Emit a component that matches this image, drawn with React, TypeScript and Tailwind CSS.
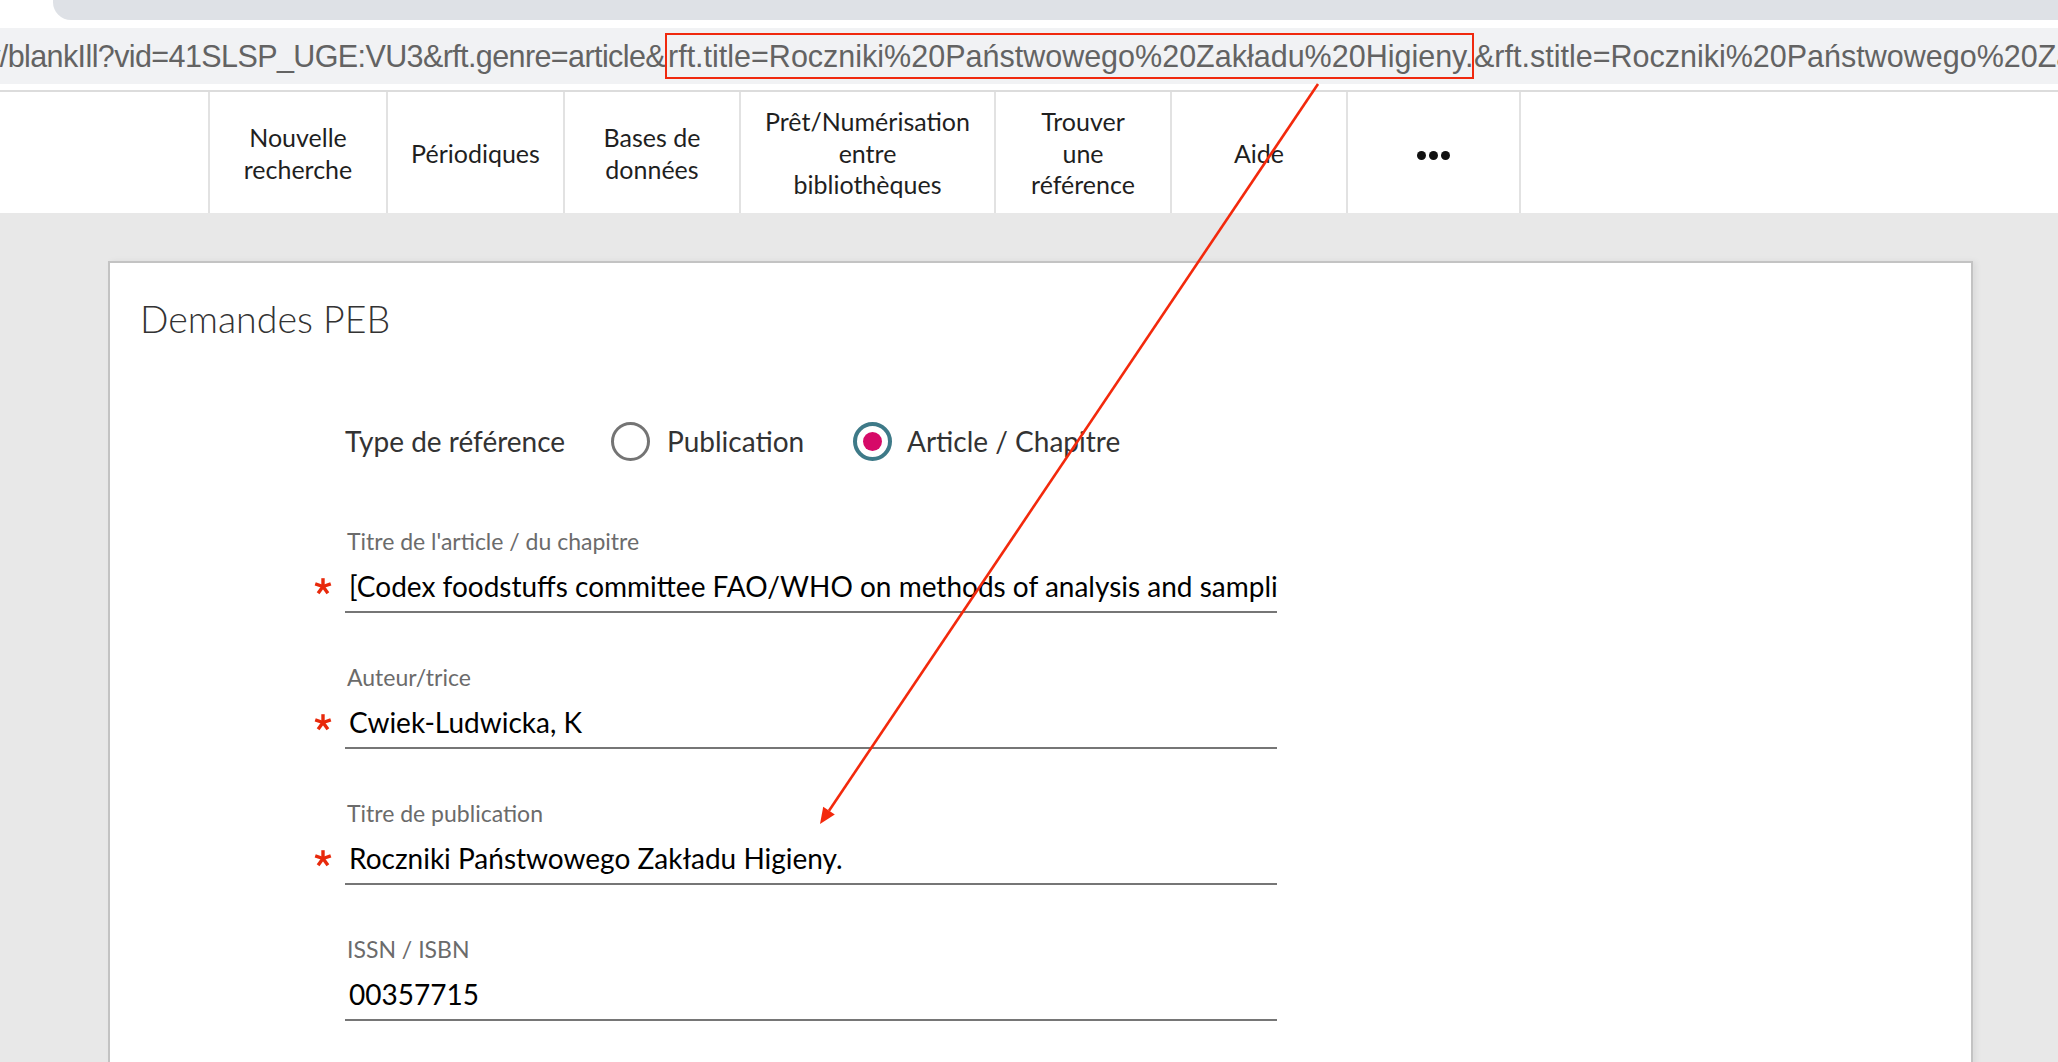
import React from "react";

const Star = () => (
  <svg width="18" height="18" viewBox="0 0 18 18" aria-hidden="true">
    <g stroke="#e8290b" strokeWidth="3.4" strokeLinecap="butt">
      <line x1="9" y1="9.5" x2="9" y2="1.2" />
      <line x1="9" y1="9.5" x2="16.8" y2="6.9" />
      <line x1="9" y1="9.5" x2="13.9" y2="16.2" />
      <line x1="9" y1="9.5" x2="4.1" y2="16.2" />
      <line x1="9" y1="9.5" x2="1.2" y2="6.9" />
    </g>
  </svg>
);

function Field({
  label,
  value,
  required,
}: {
  label: string;
  value: string;
  required?: boolean;
}) {
  return (
    <div className="w-[932px]">
      <div className="h-[28px] pl-[2px] text-[23px] leading-[28px] text-[#6b6b6b]">{label}</div>
      <div className="mt-[6px] flex h-[52px] items-center border-b-2 border-[#767676]">
        {required ? (
          <span className="-ml-[34px] flex w-[34px] shrink-0 items-center pl-[3px]">
            <Star />
          </span>
        ) : null}
        <div className="min-w-0 flex-1 overflow-hidden whitespace-nowrap pl-[4px] pr-[3px] text-[28px] leading-[36px] text-black">
          {value}
        </div>
      </div>
    </div>
  );
}

const navItems: { lines: string[]; w: string }[] = [
  { lines: ["Nouvelle", "recherche"], w: "w-[178px]" },
  { lines: ["Périodiques"], w: "w-[177px]" },
  { lines: ["Bases de", "données"], w: "w-[176px]" },
  { lines: ["Prêt/Numérisation", "entre", "bibliothèques"], w: "w-[255px]" },
  { lines: ["Trouver", "une", "référence"], w: "w-[176px]" },
  { lines: ["Aide"], w: "w-[176px]" },
];

export default function App() {
  return (
    <div className="relative h-[1062px] w-[2058px] overflow-hidden bg-white font-[Lato,sans-serif]">
      {/* browser tab strip */}
      <div className="ml-[53px] h-[20px] rounded-bl-[18px] bg-[#dee1e6]" />

      {/* URL bar */}
      <div className="mt-[8px] flex h-[56px] items-center overflow-hidden whitespace-nowrap bg-[#f1f2f4] pt-[2px] font-['Liberation_Sans',Arial,sans-serif] text-[30.5px] text-[#636363]">
        <div className="flex w-[665px] shrink-0 justify-end overflow-hidden">
          <span className="shrink-0 tracking-[-0.6px]">ary/blankIll?vid=41SLSP_UGE:VU3&amp;rft.genre=article&amp;</span>
        </div>
        <div className="-mt-[2px] flex h-[46px] w-[809px] shrink-0 items-center overflow-hidden border-2 border-[#f0290e] pl-[1px] pt-[2px]">
          rft.title=Roczniki%20Państwowego%20Zakładu%20Higieny.
        </div>
        <span className="shrink-0">&amp;rft.stitle=Roczniki%20Państwowego%20Zakładu%20Higieny.</span>
      </div>

      {/* nav */}
      <div className="mt-[6px] flex h-[123px] border-t-2 border-[#dcdcdc] bg-white pl-[208px]">
        {navItems.map((it, i) => (
          <div
            key={i}
            className={`${it.w} flex shrink-0 flex-col items-center justify-center border-l-2 border-[#e2e2e2] pt-[2px] text-center text-[25px] leading-[31.5px] text-[#1f1f1f]`}
          >
            {it.lines.map((l, j) => (
              <span key={j}>{l}</span>
            ))}
          </div>
        ))}
        <div className="flex w-[175px] shrink-0 items-center justify-center gap-[3px] border-x-2 border-[#e2e2e2] pt-[6px]">
          <span className="h-[9px] w-[9px] rounded-full bg-[#111]" />
          <span className="h-[9px] w-[9px] rounded-full bg-[#111]" />
          <span className="h-[9px] w-[9px] rounded-full bg-[#111]" />
        </div>
      </div>

      {/* page */}
      <div className="h-[900px] bg-[#e8e8e8] pt-[48px]">
        <div className="ml-[108px] h-[900px] w-[1865px] border-2 border-[#c3c3c3] bg-white pt-[34px] shadow-[3px_0_6px_rgba(0,0,0,0.06)]">
          <h1 className="pl-[30px] text-[37.5px] font-light leading-[44px] text-[#333]">Demandes PEB</h1>

          <div className="ml-[235px]">
            <div className="mt-[78px] flex h-[44px] items-center text-[28px] text-[#333]">
              <span className="w-[266px] shrink-0">Type de référence</span>
              <span className="h-[39px] w-[39px] shrink-0 rounded-full border-[3px] border-[#747474]" />
              <span className="ml-[17px] w-[186px] shrink-0">Publication</span>
              <span className="flex h-[39px] w-[39px] shrink-0 items-center justify-center rounded-full border-[4px] border-[#3e7a88]">
                <span className="h-[19px] w-[19px] rounded-full bg-[#d60a68]" />
              </span>
              <span className="ml-[15px]">Article / Chapitre</span>
            </div>

            <div className="mt-[64px] flex flex-col gap-[50px]">
              <Field
                label="Titre de l'article / du chapitre"
                value="[Codex foodstuffs committee FAO/WHO on methods of analysis and sampling]"
                required
              />
              <Field label="Auteur/trice" value="Cwiek-Ludwicka, K" required />
              <Field label="Titre de publication" value="Roczniki Państwowego Zakładu Higieny." required />
              <Field label="ISSN / ISBN" value="00357715" />
            </div>
          </div>
        </div>
      </div>

      {/* annotation arrow */}
      <svg className="pointer-events-none absolute left-0 top-0" width="2058" height="1062">
        <line x1="1318" y1="84" x2="829" y2="810.7" stroke="#f3290c" strokeWidth="2.6" />
        <polygon points="820,824 834.8,814.6 823.2,806.8" fill="#f3290c" />
      </svg>
    </div>
  );
}
